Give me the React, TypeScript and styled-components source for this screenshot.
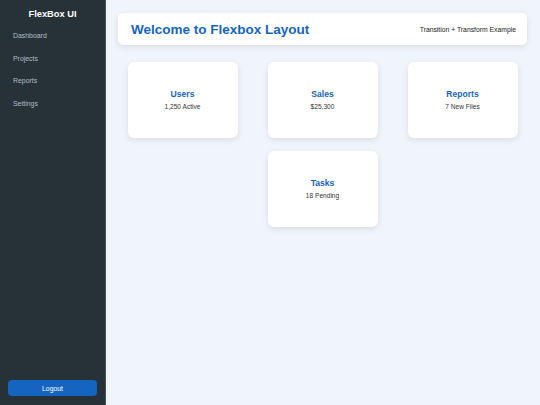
import React from 'react';
import styled, { createGlobalStyle } from 'styled-components';

const GlobalStyle = createGlobalStyle`
  html, body, #root {
    margin: 0;
    height: 100%;
  }
  body {
    font-family: "Liberation Sans", Arial, sans-serif;
  }
  * {
    box-sizing: border-box;
  }
`;

const stats = [
  { title: 'Users', value: '1,250 Active' },
  { title: 'Sales', value: '$25,300' },
  { title: 'Reports', value: '7 New Files' },
  { title: 'Tasks', value: '18 Pending' },
];

const navItems = ['Dashboard', 'Projects', 'Reports', 'Settings'];

const App = () => {
  return (
    <>
      <GlobalStyle />
      <Layout>
        <Sidebar>
          <Brand>FlexBox UI</Brand>
          <Nav>
            {navItems.map((item) => (
              <NavLink key={item}>{item}</NavLink>
            ))}
          </Nav>
          <LogoutButton>Logout</LogoutButton>
        </Sidebar>
        <Main>
          <Header>
            <Title>Welcome to Flexbox Layout</Title>
            <Subtitle>Transition + Transform Example</Subtitle>
          </Header>
          <CardGrid>
            {stats.map((s) => (
              <Card key={s.title}>
                <CardTitle>{s.title}</CardTitle>
                <CardValue>{s.value}</CardValue>
              </Card>
            ))}
          </CardGrid>
        </Main>
      </Layout>
    </>
  );
};

export default App;

const Layout = styled.div`
  display: flex;
  height: 100vh;
  background: #f0f4fb;
`;

const Sidebar = styled.aside`
  width: 106px;
  flex-shrink: 0;
  background: #263238;
  border-right: 1px solid #4a555b;
  display: flex;
  flex-direction: column;
  padding: 8px 8px 9px;
`;

const Brand = styled.div`
  color: #fff;
  font-size: 9.3px;
  font-weight: bold;
  text-align: center;
  line-height: 13px;
`;

const Nav = styled.nav`
  display: flex;
  flex-direction: column;
  gap: 13.5px;
  margin-top: 10px;
  padding-left: 5px;
  flex: 1;
`;

const NavLink = styled.a`
  color: #b0bec5;
  font-size: 6.9px;
  line-height: 9px;
  cursor: pointer;
`;

const LogoutButton = styled.button`
  width: 89px;
  height: 16px;
  border: none;
  border-radius: 4px;
  background: #1565c0;
  color: #fff;
  font-family: inherit;
  font-size: 6.8px;
  padding: 0;
  cursor: pointer;
`;

const Main = styled.main`
  flex: 1;
  padding: 13px 13px 13px 12px;
  display: flex;
  flex-direction: column;
`;

const Header = styled.header`
  height: 32px;
  background: #fff;
  border-radius: 5px;
  box-shadow: 0 2px 6px rgba(0, 0, 0, 0.1);
  display: flex;
  align-items: center;
  justify-content: space-between;
  padding: 0 11px 0 13px;
`;

const Title = styled.h1`
  margin: 0;
  color: #1565c0;
  font-size: 13.5px;
  font-weight: bold;
`;

const Subtitle = styled.span`
  color: #222;
  font-size: 6.8px;
`;

const CardGrid = styled.div`
  display: flex;
  flex-wrap: wrap;
  justify-content: center;
  column-gap: 30px;
  row-gap: 13px;
  margin-top: 17px;
`;

const Card = styled.div`
  width: 110px;
  height: 76px;
  background: #fff;
  border-radius: 6px;
  box-shadow: 0 2px 6px rgba(0, 0, 0, 0.1);
  display: flex;
  flex-direction: column;
  align-items: center;
  justify-content: center;
  transition: transform 0.3s ease, box-shadow 0.3s ease;

  &:hover {
    transform: translateY(-4px) scale(1.03);
    box-shadow: 0 6px 14px rgba(0, 0, 0, 0.15);
  }
`;

const CardTitle = styled.h3`
  margin: 0 0 4px;
  color: #1565c0;
  font-size: 8.6px;
  line-height: 10px;
  font-weight: bold;
`;

const CardValue = styled.p`
  margin: 0;
  color: #333;
  font-size: 6.6px;
  line-height: 8px;
`;
